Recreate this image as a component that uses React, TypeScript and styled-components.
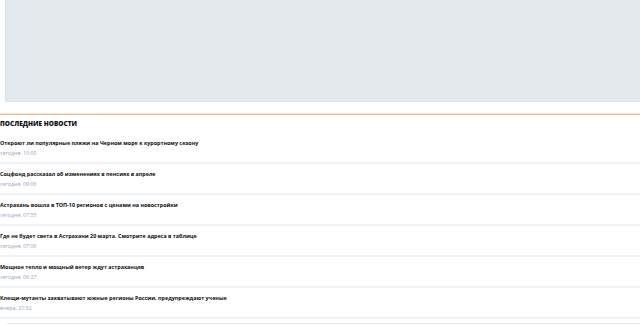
import React from "react";
import styled, { createGlobalStyle } from "styled-components";

const Global = createGlobalStyle`
  html, body { margin: 0; padding: 0; background: #fff; }
  body { font-family: "Open Sans", "Noto Sans", sans-serif; overflow: hidden; }
`;

const Page = styled.div`
  width: 640px;
  height: 325px;
  overflow: hidden;
  display: flex;
  flex-direction: column;
`;

const Banner = styled.div`
  margin-left: 5px;
  height: 101px;
  background: #e4e9ee;
  border-left: 1px solid #dce2e8;
  border-bottom: 1px solid #dce2e8;
  flex-shrink: 0;
`;

const Section = styled.section`
  margin-top: 12px;
  border-top: 1px solid #ebb993;
  box-shadow: 0 -1px 0 #f8e6d8;
`;

const Heading = styled.h2`
  margin: 0;
  padding: 3px 0 0 0;
  height: 15px;
  font-size: 6.5px;
  line-height: 12px;
  font-weight: 800;
  color: #111;
`;

const List = styled.ul`
  list-style: none;
  margin: 0;
  padding: 0;
`;

const Item = styled.li`
  height: 29px;
  border-bottom: 2px solid #eef1f5;
  display: flex;
  flex-direction: column;
`;

const Title = styled.a`
  display: block;
  margin-top: 6px;
  font-size: 5.4px;
  line-height: 8px;
  font-weight: 700;
  color: #0d0d0d;
  text-decoration: none;
`;

const Time = styled.span`
  display: block;
  margin-top: 2.5px;
  font-size: 5.3px;
  line-height: 7px;
  color: #94a3b6;
`;

const NextBlock = styled.div`
  margin-left: 7px;
  margin-top: 4px;
  height: 20px;
  border-top: 1px solid #e4e9ee;
`;

const news = [
  { title: "Откроют ли популярные пляжи на Черном море к курортному сезону", time: "сегодня, 10:00" },
  { title: "Соцфонд рассказал об изменениях в пенсиях в апреле", time: "сегодня, 09:06" },
  { title: "Астрахань вошла в ТОП-10 регионов с ценами на новостройки", time: "сегодня, 07:55" },
  { title: "Где не будет света в Астрахани 20 марта. Смотрите адреса в таблице", time: "сегодня, 07:06" },
  { title: "Мощное тепло и мощный ветер ждут астраханцев", time: "сегодня, 06:27" },
  { title: "Клещи-мутанты захватывают южные регионы России, предупреждают ученые", time: "вчера, 21:32" },
];

export default function App() {
  return (
    <Page>
      <Global />
      <Banner />
      <Section>
        <Heading>ПОСЛЕДНИЕ НОВОСТИ</Heading>
        <List>
          {news.map((n) => (
            <Item key={n.title}>
              <Title href="#">{n.title}</Title>
              <Time>{n.time}</Time>
            </Item>
          ))}
        </List>
        <NextBlock />
      </Section>
    </Page>
  );
}
